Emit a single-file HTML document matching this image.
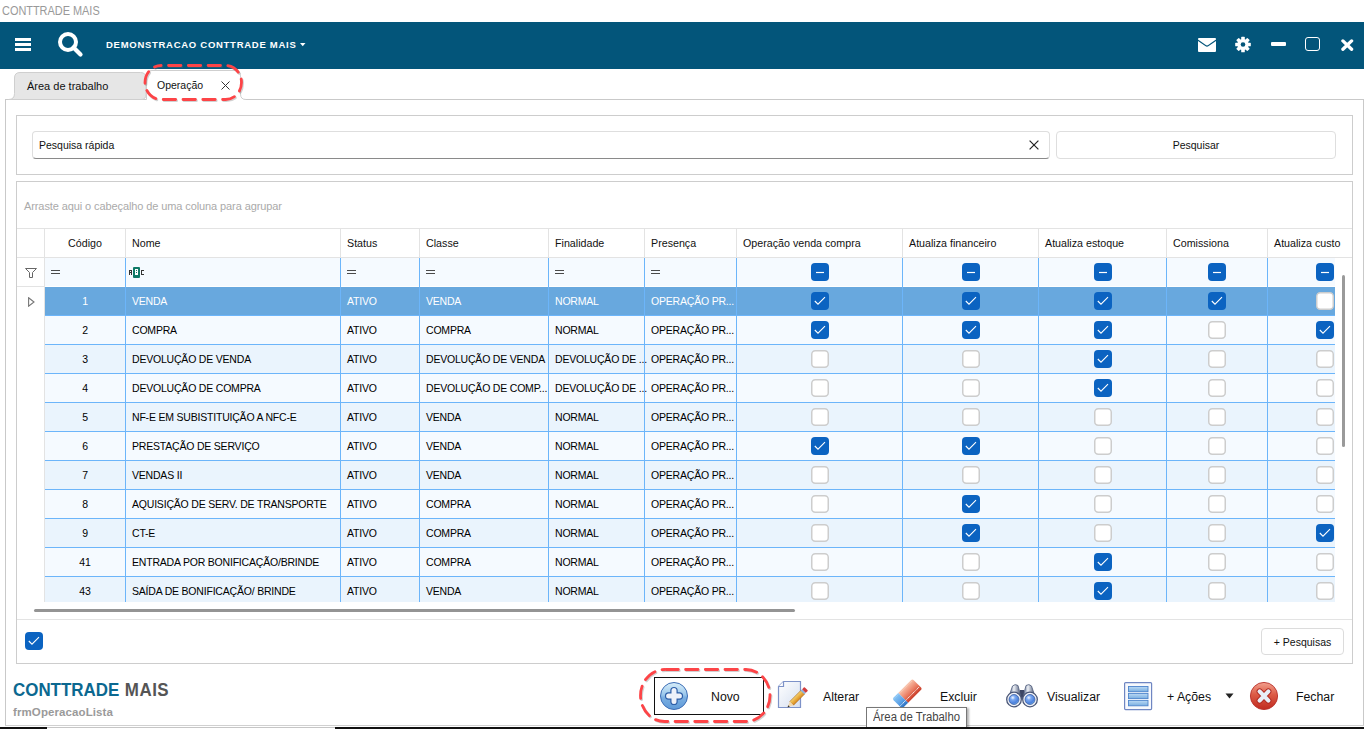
<!DOCTYPE html>
<html><head><meta charset="utf-8">
<style>
*{box-sizing:border-box;margin:0;padding:0}
html,body{width:1364px;height:729px;overflow:hidden;background:#fff;font-family:"Liberation Sans",sans-serif;color:#000}
.a{position:absolute;white-space:nowrap}
#title{left:2px;top:4px;font-size:12px;color:#999;transform:scaleX(0.91);transform-origin:0 0}
#hdr{left:0;top:22px;width:1364px;height:47px;background:#03557a}
#hdrtxt{left:106px;top:38.6px;font-size:9.5px;font-weight:bold;color:#fff;letter-spacing:0.72px}
.tab{top:72px;height:28px;border:1px solid #cfcfcf;border-bottom:none;border-radius:6px 6px 0 0;font-size:11px;padding-top:7px;color:#111}
#tab1{left:13px;width:134px;background:#e6e6e6;padding-left:13px}
#tab2{left:146px;width:96px;background:#fff;padding-left:10px;top:70px;height:30px;padding-top:9px;font-size:10.5px}
#outer{left:5px;top:99px;width:1359px;height:627px;border:1px solid #c9c9c9;border-bottom:1px solid #d0d0d0}
#sbox{left:16px;top:115px;width:1337px;height:60px;border:1px solid #cdcdcd}
#sinp{left:32px;top:131px;width:1018px;height:28px;border:1px solid #dedede;border-bottom:1px solid #8a8a8a;border-radius:4px;font-size:10.5px;padding:7px 0 0 6px;color:#111}
#sbtn{left:1056px;top:131px;width:280px;height:28px;border:1px solid #dedede;border-radius:4px;font-size:10.5px;text-align:center;padding-top:7px;color:#111}
#gbox{left:16px;top:181px;width:1337px;height:483px;border:1px solid #cdcdcd}
#grp{left:24px;top:200px;font-size:11px;color:#aaa;letter-spacing:-0.1px}
.hd{font-size:10.7px;color:#111}
.td{font-size:10.5px;letter-spacing:-0.2px}
#pbtn{left:1261px;top:628px;width:83px;height:27px;border:1px solid #dcdcdc;border-radius:4px;font-size:10.5px;text-align:center;padding-top:7px;color:#111}
#logo{left:13px;top:680px;font-size:18px;font-weight:bold;transform:scaleX(0.94);transform-origin:0 0}
#frm{left:13px;top:706px;font-size:11.5px;font-weight:bold;color:#9a9a9a;letter-spacing:0.1px}
.tb{top:690px;font-size:12.3px;color:#111}
#tip{left:866px;top:707px;width:101px;height:21px;border:1px solid #777;background:#fff;color:#444;box-shadow:2px 1px 2px rgba(0,0,0,0.3)}
#tip span{position:absolute;left:6px;top:2px;font-size:12px;transform:scaleX(0.945);transform-origin:0 0}
.tabt{font-size:11px;color:#111}

</style></head><body>
<div class="a" id="title">CONTTRADE MAIS</div>
<div class="a" id="hdr"></div>
<svg class="a" style="left:15px;top:38px" width="16" height="13" viewBox="0 0 16 13"><rect x="0" y="0" width="16" height="3" fill="#fff"/><rect x="0" y="5" width="16" height="3" fill="#fff"/><rect x="0" y="10" width="16" height="3" fill="#fff"/></svg>
<svg class="a" style="left:56px;top:30px" width="30" height="30" viewBox="0 0 30 30"><circle cx="12" cy="12" r="8" fill="none" stroke="#fff" stroke-width="4"/><path d="M17.5 17.5 L24.5 24.5" stroke="#fff" stroke-width="4.2" stroke-linecap="round"/></svg>
<div class="a" id="hdrtxt">DEMONSTRACAO CONTTRADE MAIS</div>
<svg class="a" style="left:300px;top:43px" width="6" height="4" viewBox="0 0 6 4"><path d="M0 0 H5.5 L2.75 3.2 Z" fill="#fff"/></svg>
<svg class="a" style="left:1198px;top:38px" width="18" height="14" viewBox="0 0 18 14"><path d="M0 1 Q0 0 1 0 H17 Q18 0 18 1 V1.6 L10.2 7 Q9 7.8 7.8 7 L0 1.6 Z" fill="#fff"/><path d="M0 3.1 L7.3 8.1 Q9 9.2 10.7 8.1 L18 3.1 V13 Q18 14 17 14 H1 Q0 14 0 13 Z" fill="#fff"/></svg>
<svg class="a" style="left:1234px;top:36px" width="18" height="17" viewBox="-9 -8.5 18 17"><g fill="#fff"><circle r="5.6"/><rect x="-1.8" y="-7.8" width="3.6" height="15.6" rx="0.6"/><rect x="-1.8" y="-7.8" width="3.6" height="15.6" rx="0.6" transform="rotate(45)"/><rect x="-1.8" y="-7.8" width="3.6" height="15.6" rx="0.6" transform="rotate(90)"/><rect x="-1.8" y="-7.8" width="3.6" height="15.6" rx="0.6" transform="rotate(135)"/></g><circle r="2.3" fill="#03557a"/></svg>
<div class="a" style="left:1271px;top:42px;width:15px;height:4px;background:#fff;border-radius:1px"></div>
<div class="a" style="left:1305px;top:37px;width:15px;height:14px;border:1.6px solid #fff;border-radius:3px"></div>
<svg class="a" style="left:1340px;top:39px" width="14" height="12" viewBox="0 0 14 12"><path d="M2.9 1.9 L11.6 10.3 M11.6 1.9 L2.9 10.3" stroke="#fff" stroke-width="3.3" stroke-linecap="round"/></svg>
<div class="a" id="outer"></div>
<svg class="a" style="left:0;top:60px" width="260" height="45" viewBox="0 60 260 45"><path d="M8.5 99.5 Q14.5 99.5 14.5 93.5 V78 Q14.5 72.5 20 72.5 H140.5 Q146 72.5 146 78 V94.5 Q146 99.5 141 99.5 Z" fill="#e6e6e6" stroke="#cfcfcf" stroke-width="1"/><path d="M146.5 100.5 V76 Q146.5 70.5 152 70.5 H235 Q240.5 70.5 240.5 76 V94 Q240.5 99.5 246 99.5 V100.5 Z" fill="#fff" stroke="none"/><path d="M146.5 99.5 V76 Q146.5 70.5 152 70.5 H235 Q240.5 70.5 240.5 76 V94 Q240.5 99.5 246 99.5" fill="none" stroke="#cfcfcf" stroke-width="1"/></svg>
<div class="a tabt" style="left:27px;top:80px">Área de trabalho</div>
<div class="a tabt" style="left:157px;top:79px;font-size:10.5px">Operação</div>
<svg class="a" style="left:221px;top:81px" width="9" height="9" viewBox="0 0 9 9"><path d="M0.5 0.5 L8.5 8.5 M8.5 0.5 L0.5 8.5" stroke="#333" stroke-width="1"/></svg>
<div class="a" id="sbox"></div>
<div class="a" id="sinp">Pesquisa rápida</div>
<svg class="a" style="left:1029px;top:140px" width="10" height="10" viewBox="0 0 10 10"><path d="M0.6 0.6 L9.4 9.4 M9.4 0.6 L0.6 9.4" stroke="#222" stroke-width="1.2"/></svg>
<div class="a" id="sbtn">Pesquisar</div>
<div class="a" id="gbox"></div>
<div class="a" id="grp">Arraste aqui o cabeçalho de uma coluna para agrupar</div>
<div class="a" style="left:17px;top:228px;width:1335px;height:1px;background:#e3e3e3"></div>
<div class="a" style="left:17px;top:257px;width:1335px;height:1px;background:#e3e3e3"></div>
<div class="a" id="gclip" style="left:17px;top:228px;width:1335px;height:374px;overflow:hidden">
<div class="a" style="left:27px;top:0;width:1px;height:29px;background:#e3e3e3"></div>
<div class="a" style="left:108px;top:0;width:1px;height:29px;background:#e3e3e3"></div>
<div class="a" style="left:323px;top:0;width:1px;height:29px;background:#e3e3e3"></div>
<div class="a" style="left:402px;top:0;width:1px;height:29px;background:#e3e3e3"></div>
<div class="a" style="left:531px;top:0;width:1px;height:29px;background:#e3e3e3"></div>
<div class="a" style="left:627px;top:0;width:1px;height:29px;background:#e3e3e3"></div>
<div class="a" style="left:719px;top:0;width:1px;height:29px;background:#e3e3e3"></div>
<div class="a" style="left:885px;top:0;width:1px;height:29px;background:#e3e3e3"></div>
<div class="a" style="left:1021px;top:0;width:1px;height:29px;background:#e3e3e3"></div>
<div class="a" style="left:1149px;top:0;width:1px;height:29px;background:#e3e3e3"></div>
<div class="a" style="left:1250px;top:0;width:1px;height:29px;background:#e3e3e3"></div>
<div class="a hd" style="left:28px;top:9px;width:80px;text-align:center">Código</div>
<div class="a hd" style="left:115px;top:9px">Nome</div>
<div class="a hd" style="left:330px;top:9px">Status</div>
<div class="a hd" style="left:409px;top:9px">Classe</div>
<div class="a hd" style="left:538px;top:9px">Finalidade</div>
<div class="a hd" style="left:634px;top:9px">Presença</div>
<div class="a hd" style="left:726px;top:9px">Operação venda compra</div>
<div class="a hd" style="left:892px;top:9px">Atualiza financeiro</div>
<div class="a hd" style="left:1028px;top:9px">Atualiza estoque</div>
<div class="a hd" style="left:1156px;top:9px">Comissiona</div>
<div class="a hd" style="left:1257px;top:9px">Atualiza custo</div>
<div class="a" style="left:28px;top:30px;width:1290px;height:28px;background:#f5faff"></div>
<svg class="a" style="left:8px;top:40px" width="12" height="11" viewBox="0 0 12 11"><path d="M0.5 0.5 H11.5 L7.5 4.5 V9.5 H4.5 V4.5 Z" fill="none" stroke="#666" stroke-width="1"/></svg>
<div class="a" style="left:34px;top:42px;width:9px;height:4px;border-top:1px solid #4a4a4a;border-bottom:1px solid #4a4a4a"></div>
<div class="a" style="left:112px;top:39px;line-height:0"><svg width="16" height="12" viewBox="0 0 16 12" shape-rendering="crispEdges"><g fill="#333"><rect x="0" y="3" width="3" height="1"/><rect x="0" y="3" width="1" height="5"/><rect x="2" y="3" width="1" height="5"/><rect x="0" y="5" width="3" height="1"/><rect x="12" y="3" width="3" height="1"/><rect x="12" y="3" width="1" height="5"/><rect x="12" y="7" width="3" height="1"/></g><rect x="4" y="0" width="7" height="11" rx="1" fill="#0f7a68" shape-rendering="auto"/><rect x="6" y="2" width="3" height="6" fill="#fff"/><rect x="7" y="3" width="1" height="1" fill="#0f7a68"/><rect x="7" y="5" width="1" height="1" fill="#0f7a68"/></svg></div>
<div class="a" style="left:330px;top:42px;width:9px;height:4px;border-top:1px solid #4a4a4a;border-bottom:1px solid #4a4a4a"></div>
<div class="a" style="left:409px;top:42px;width:9px;height:4px;border-top:1px solid #4a4a4a;border-bottom:1px solid #4a4a4a"></div>
<div class="a" style="left:538px;top:42px;width:9px;height:4px;border-top:1px solid #4a4a4a;border-bottom:1px solid #4a4a4a"></div>
<div class="a" style="left:634px;top:42px;width:9px;height:4px;border-top:1px solid #4a4a4a;border-bottom:1px solid #4a4a4a"></div>
<div class="a" style="left:794px;top:35px;width:18px;height:18px"><svg width="18" height="18" viewBox="0 0 18 18"><rect x="0" y="0" width="18" height="18" rx="4" fill="#0b63c1"/><path d="M5 9.5 H13" fill="none" stroke="#fff" stroke-width="1.2"/></svg></div>
<div class="a" style="left:945px;top:35px;width:18px;height:18px"><svg width="18" height="18" viewBox="0 0 18 18"><rect x="0" y="0" width="18" height="18" rx="4" fill="#0b63c1"/><path d="M5 9.5 H13" fill="none" stroke="#fff" stroke-width="1.2"/></svg></div>
<div class="a" style="left:1077px;top:35px;width:18px;height:18px"><svg width="18" height="18" viewBox="0 0 18 18"><rect x="0" y="0" width="18" height="18" rx="4" fill="#0b63c1"/><path d="M5 9.5 H13" fill="none" stroke="#fff" stroke-width="1.2"/></svg></div>
<div class="a" style="left:1191px;top:35px;width:18px;height:18px"><svg width="18" height="18" viewBox="0 0 18 18"><rect x="0" y="0" width="18" height="18" rx="4" fill="#0b63c1"/><path d="M5 9.5 H13" fill="none" stroke="#fff" stroke-width="1.2"/></svg></div>
<div class="a" style="left:1299px;top:35px;width:18px;height:18px"><svg width="18" height="18" viewBox="0 0 18 18"><rect x="0" y="0" width="18" height="18" rx="4" fill="#0b63c1"/><path d="M5 9.5 H13" fill="none" stroke="#fff" stroke-width="1.2"/></svg></div>
<div class="a" style="left:28px;top:59px;width:1290px;height:28px;background:#68a8de"></div>
<div class="a" style="left:28px;top:87px;width:1290px;height:1px;background:#6cb5fa"></div>
<div class="a td" style="left:28px;top:67px;width:80px;text-align:center;color:#fff">1</div>
<div class="a td" style="left:115px;top:67px;color:#fff">VENDA</div>
<div class="a td" style="left:330px;top:67px;color:#fff">ATIVO</div>
<div class="a td" style="left:409px;top:67px;color:#fff">VENDA</div>
<div class="a td" style="left:538px;top:67px;color:#fff">NORMAL</div>
<div class="a td" style="left:634px;top:67px;color:#fff">OPERAÇÃO PR...</div>
<div class="a" style="left:794px;top:64px;width:18px;height:18px"><svg width="18" height="18" viewBox="0 0 18 18"><rect x="0" y="0" width="18" height="18" rx="4" fill="#0b63c1"/><path d="M3.8 9 L7 12.2 L14 5.2" fill="none" stroke="#fff" stroke-width="1.1"/></svg></div>
<div class="a" style="left:945px;top:64px;width:18px;height:18px"><svg width="18" height="18" viewBox="0 0 18 18"><rect x="0" y="0" width="18" height="18" rx="4" fill="#0b63c1"/><path d="M3.8 9 L7 12.2 L14 5.2" fill="none" stroke="#fff" stroke-width="1.1"/></svg></div>
<div class="a" style="left:1077px;top:64px;width:18px;height:18px"><svg width="18" height="18" viewBox="0 0 18 18"><rect x="0" y="0" width="18" height="18" rx="4" fill="#0b63c1"/><path d="M3.8 9 L7 12.2 L14 5.2" fill="none" stroke="#fff" stroke-width="1.1"/></svg></div>
<div class="a" style="left:1191px;top:64px;width:18px;height:18px"><svg width="18" height="18" viewBox="0 0 18 18"><rect x="0" y="0" width="18" height="18" rx="4" fill="#0b63c1"/><path d="M3.8 9 L7 12.2 L14 5.2" fill="none" stroke="#fff" stroke-width="1.1"/></svg></div>
<div class="a" style="left:1299px;top:64px;width:18px;height:18px"><svg width="18" height="18" viewBox="0 0 18 18"><rect x="0.75" y="0.75" width="16.5" height="16.5" rx="3.5" fill="#fff" stroke="#cdcdcd" stroke-width="1.5"/></svg></div>
<div class="a" style="left:28px;top:88px;width:1290px;height:28px;background:#f5faff"></div>
<div class="a" style="left:28px;top:116px;width:1290px;height:1px;background:#6cb5fa"></div>
<div class="a td" style="left:28px;top:96px;width:80px;text-align:center;color:#000">2</div>
<div class="a td" style="left:115px;top:96px;color:#000">COMPRA</div>
<div class="a td" style="left:330px;top:96px;color:#000">ATIVO</div>
<div class="a td" style="left:409px;top:96px;color:#000">COMPRA</div>
<div class="a td" style="left:538px;top:96px;color:#000">NORMAL</div>
<div class="a td" style="left:634px;top:96px;color:#000">OPERAÇÃO PR...</div>
<div class="a" style="left:794px;top:93px;width:18px;height:18px"><svg width="18" height="18" viewBox="0 0 18 18"><rect x="0" y="0" width="18" height="18" rx="4" fill="#0b63c1"/><path d="M3.8 9 L7 12.2 L14 5.2" fill="none" stroke="#fff" stroke-width="1.1"/></svg></div>
<div class="a" style="left:945px;top:93px;width:18px;height:18px"><svg width="18" height="18" viewBox="0 0 18 18"><rect x="0" y="0" width="18" height="18" rx="4" fill="#0b63c1"/><path d="M3.8 9 L7 12.2 L14 5.2" fill="none" stroke="#fff" stroke-width="1.1"/></svg></div>
<div class="a" style="left:1077px;top:93px;width:18px;height:18px"><svg width="18" height="18" viewBox="0 0 18 18"><rect x="0" y="0" width="18" height="18" rx="4" fill="#0b63c1"/><path d="M3.8 9 L7 12.2 L14 5.2" fill="none" stroke="#fff" stroke-width="1.1"/></svg></div>
<div class="a" style="left:1191px;top:93px;width:18px;height:18px"><svg width="18" height="18" viewBox="0 0 18 18"><rect x="0.75" y="0.75" width="16.5" height="16.5" rx="3.5" fill="#fff" stroke="#cdcdcd" stroke-width="1.5"/></svg></div>
<div class="a" style="left:1299px;top:93px;width:18px;height:18px"><svg width="18" height="18" viewBox="0 0 18 18"><rect x="0" y="0" width="18" height="18" rx="4" fill="#0b63c1"/><path d="M3.8 9 L7 12.2 L14 5.2" fill="none" stroke="#fff" stroke-width="1.1"/></svg></div>
<div class="a" style="left:28px;top:117px;width:1290px;height:28px;background:#eaf4fd"></div>
<div class="a" style="left:28px;top:145px;width:1290px;height:1px;background:#6cb5fa"></div>
<div class="a td" style="left:28px;top:125px;width:80px;text-align:center;color:#000">3</div>
<div class="a td" style="left:115px;top:125px;color:#000">DEVOLUÇÃO DE VENDA</div>
<div class="a td" style="left:330px;top:125px;color:#000">ATIVO</div>
<div class="a td" style="left:409px;top:125px;color:#000">DEVOLUÇÃO DE VENDA</div>
<div class="a td" style="left:538px;top:125px;color:#000">DEVOLUÇÃO DE ...</div>
<div class="a td" style="left:634px;top:125px;color:#000">OPERAÇÃO PR...</div>
<div class="a" style="left:794px;top:122px;width:18px;height:18px"><svg width="18" height="18" viewBox="0 0 18 18"><rect x="0.75" y="0.75" width="16.5" height="16.5" rx="3.5" fill="#fff" stroke="#cdcdcd" stroke-width="1.5"/></svg></div>
<div class="a" style="left:945px;top:122px;width:18px;height:18px"><svg width="18" height="18" viewBox="0 0 18 18"><rect x="0.75" y="0.75" width="16.5" height="16.5" rx="3.5" fill="#fff" stroke="#cdcdcd" stroke-width="1.5"/></svg></div>
<div class="a" style="left:1077px;top:122px;width:18px;height:18px"><svg width="18" height="18" viewBox="0 0 18 18"><rect x="0" y="0" width="18" height="18" rx="4" fill="#0b63c1"/><path d="M3.8 9 L7 12.2 L14 5.2" fill="none" stroke="#fff" stroke-width="1.1"/></svg></div>
<div class="a" style="left:1191px;top:122px;width:18px;height:18px"><svg width="18" height="18" viewBox="0 0 18 18"><rect x="0.75" y="0.75" width="16.5" height="16.5" rx="3.5" fill="#fff" stroke="#cdcdcd" stroke-width="1.5"/></svg></div>
<div class="a" style="left:1299px;top:122px;width:18px;height:18px"><svg width="18" height="18" viewBox="0 0 18 18"><rect x="0.75" y="0.75" width="16.5" height="16.5" rx="3.5" fill="#fff" stroke="#cdcdcd" stroke-width="1.5"/></svg></div>
<div class="a" style="left:28px;top:146px;width:1290px;height:28px;background:#f5faff"></div>
<div class="a" style="left:28px;top:174px;width:1290px;height:1px;background:#6cb5fa"></div>
<div class="a td" style="left:28px;top:154px;width:80px;text-align:center;color:#000">4</div>
<div class="a td" style="left:115px;top:154px;color:#000">DEVOLUÇÃO DE COMPRA</div>
<div class="a td" style="left:330px;top:154px;color:#000">ATIVO</div>
<div class="a td" style="left:409px;top:154px;color:#000">DEVOLUÇÃO DE COMP...</div>
<div class="a td" style="left:538px;top:154px;color:#000">DEVOLUÇÃO DE ...</div>
<div class="a td" style="left:634px;top:154px;color:#000">OPERAÇÃO PR...</div>
<div class="a" style="left:794px;top:151px;width:18px;height:18px"><svg width="18" height="18" viewBox="0 0 18 18"><rect x="0.75" y="0.75" width="16.5" height="16.5" rx="3.5" fill="#fff" stroke="#cdcdcd" stroke-width="1.5"/></svg></div>
<div class="a" style="left:945px;top:151px;width:18px;height:18px"><svg width="18" height="18" viewBox="0 0 18 18"><rect x="0.75" y="0.75" width="16.5" height="16.5" rx="3.5" fill="#fff" stroke="#cdcdcd" stroke-width="1.5"/></svg></div>
<div class="a" style="left:1077px;top:151px;width:18px;height:18px"><svg width="18" height="18" viewBox="0 0 18 18"><rect x="0" y="0" width="18" height="18" rx="4" fill="#0b63c1"/><path d="M3.8 9 L7 12.2 L14 5.2" fill="none" stroke="#fff" stroke-width="1.1"/></svg></div>
<div class="a" style="left:1191px;top:151px;width:18px;height:18px"><svg width="18" height="18" viewBox="0 0 18 18"><rect x="0.75" y="0.75" width="16.5" height="16.5" rx="3.5" fill="#fff" stroke="#cdcdcd" stroke-width="1.5"/></svg></div>
<div class="a" style="left:1299px;top:151px;width:18px;height:18px"><svg width="18" height="18" viewBox="0 0 18 18"><rect x="0.75" y="0.75" width="16.5" height="16.5" rx="3.5" fill="#fff" stroke="#cdcdcd" stroke-width="1.5"/></svg></div>
<div class="a" style="left:28px;top:175px;width:1290px;height:28px;background:#eaf4fd"></div>
<div class="a" style="left:28px;top:203px;width:1290px;height:1px;background:#6cb5fa"></div>
<div class="a td" style="left:28px;top:183px;width:80px;text-align:center;color:#000">5</div>
<div class="a td" style="left:115px;top:183px;color:#000">NF-E EM SUBISTITUIÇÃO A NFC-E</div>
<div class="a td" style="left:330px;top:183px;color:#000">ATIVO</div>
<div class="a td" style="left:409px;top:183px;color:#000">VENDA</div>
<div class="a td" style="left:538px;top:183px;color:#000">NORMAL</div>
<div class="a td" style="left:634px;top:183px;color:#000">OPERAÇÃO PR...</div>
<div class="a" style="left:794px;top:180px;width:18px;height:18px"><svg width="18" height="18" viewBox="0 0 18 18"><rect x="0.75" y="0.75" width="16.5" height="16.5" rx="3.5" fill="#fff" stroke="#cdcdcd" stroke-width="1.5"/></svg></div>
<div class="a" style="left:945px;top:180px;width:18px;height:18px"><svg width="18" height="18" viewBox="0 0 18 18"><rect x="0.75" y="0.75" width="16.5" height="16.5" rx="3.5" fill="#fff" stroke="#cdcdcd" stroke-width="1.5"/></svg></div>
<div class="a" style="left:1077px;top:180px;width:18px;height:18px"><svg width="18" height="18" viewBox="0 0 18 18"><rect x="0.75" y="0.75" width="16.5" height="16.5" rx="3.5" fill="#fff" stroke="#cdcdcd" stroke-width="1.5"/></svg></div>
<div class="a" style="left:1191px;top:180px;width:18px;height:18px"><svg width="18" height="18" viewBox="0 0 18 18"><rect x="0.75" y="0.75" width="16.5" height="16.5" rx="3.5" fill="#fff" stroke="#cdcdcd" stroke-width="1.5"/></svg></div>
<div class="a" style="left:1299px;top:180px;width:18px;height:18px"><svg width="18" height="18" viewBox="0 0 18 18"><rect x="0.75" y="0.75" width="16.5" height="16.5" rx="3.5" fill="#fff" stroke="#cdcdcd" stroke-width="1.5"/></svg></div>
<div class="a" style="left:28px;top:204px;width:1290px;height:28px;background:#f5faff"></div>
<div class="a" style="left:28px;top:232px;width:1290px;height:1px;background:#6cb5fa"></div>
<div class="a td" style="left:28px;top:212px;width:80px;text-align:center;color:#000">6</div>
<div class="a td" style="left:115px;top:212px;color:#000">PRESTAÇÃO DE SERVIÇO</div>
<div class="a td" style="left:330px;top:212px;color:#000">ATIVO</div>
<div class="a td" style="left:409px;top:212px;color:#000">VENDA</div>
<div class="a td" style="left:538px;top:212px;color:#000">NORMAL</div>
<div class="a td" style="left:634px;top:212px;color:#000">OPERAÇÃO PR...</div>
<div class="a" style="left:794px;top:209px;width:18px;height:18px"><svg width="18" height="18" viewBox="0 0 18 18"><rect x="0" y="0" width="18" height="18" rx="4" fill="#0b63c1"/><path d="M3.8 9 L7 12.2 L14 5.2" fill="none" stroke="#fff" stroke-width="1.1"/></svg></div>
<div class="a" style="left:945px;top:209px;width:18px;height:18px"><svg width="18" height="18" viewBox="0 0 18 18"><rect x="0" y="0" width="18" height="18" rx="4" fill="#0b63c1"/><path d="M3.8 9 L7 12.2 L14 5.2" fill="none" stroke="#fff" stroke-width="1.1"/></svg></div>
<div class="a" style="left:1077px;top:209px;width:18px;height:18px"><svg width="18" height="18" viewBox="0 0 18 18"><rect x="0.75" y="0.75" width="16.5" height="16.5" rx="3.5" fill="#fff" stroke="#cdcdcd" stroke-width="1.5"/></svg></div>
<div class="a" style="left:1191px;top:209px;width:18px;height:18px"><svg width="18" height="18" viewBox="0 0 18 18"><rect x="0.75" y="0.75" width="16.5" height="16.5" rx="3.5" fill="#fff" stroke="#cdcdcd" stroke-width="1.5"/></svg></div>
<div class="a" style="left:1299px;top:209px;width:18px;height:18px"><svg width="18" height="18" viewBox="0 0 18 18"><rect x="0.75" y="0.75" width="16.5" height="16.5" rx="3.5" fill="#fff" stroke="#cdcdcd" stroke-width="1.5"/></svg></div>
<div class="a" style="left:28px;top:233px;width:1290px;height:28px;background:#eaf4fd"></div>
<div class="a" style="left:28px;top:261px;width:1290px;height:1px;background:#6cb5fa"></div>
<div class="a td" style="left:28px;top:241px;width:80px;text-align:center;color:#000">7</div>
<div class="a td" style="left:115px;top:241px;color:#000">VENDAS II</div>
<div class="a td" style="left:330px;top:241px;color:#000">ATIVO</div>
<div class="a td" style="left:409px;top:241px;color:#000">VENDA</div>
<div class="a td" style="left:538px;top:241px;color:#000">NORMAL</div>
<div class="a td" style="left:634px;top:241px;color:#000">OPERAÇÃO PR...</div>
<div class="a" style="left:794px;top:238px;width:18px;height:18px"><svg width="18" height="18" viewBox="0 0 18 18"><rect x="0.75" y="0.75" width="16.5" height="16.5" rx="3.5" fill="#fff" stroke="#cdcdcd" stroke-width="1.5"/></svg></div>
<div class="a" style="left:945px;top:238px;width:18px;height:18px"><svg width="18" height="18" viewBox="0 0 18 18"><rect x="0.75" y="0.75" width="16.5" height="16.5" rx="3.5" fill="#fff" stroke="#cdcdcd" stroke-width="1.5"/></svg></div>
<div class="a" style="left:1077px;top:238px;width:18px;height:18px"><svg width="18" height="18" viewBox="0 0 18 18"><rect x="0.75" y="0.75" width="16.5" height="16.5" rx="3.5" fill="#fff" stroke="#cdcdcd" stroke-width="1.5"/></svg></div>
<div class="a" style="left:1191px;top:238px;width:18px;height:18px"><svg width="18" height="18" viewBox="0 0 18 18"><rect x="0.75" y="0.75" width="16.5" height="16.5" rx="3.5" fill="#fff" stroke="#cdcdcd" stroke-width="1.5"/></svg></div>
<div class="a" style="left:1299px;top:238px;width:18px;height:18px"><svg width="18" height="18" viewBox="0 0 18 18"><rect x="0.75" y="0.75" width="16.5" height="16.5" rx="3.5" fill="#fff" stroke="#cdcdcd" stroke-width="1.5"/></svg></div>
<div class="a" style="left:28px;top:262px;width:1290px;height:28px;background:#f5faff"></div>
<div class="a" style="left:28px;top:290px;width:1290px;height:1px;background:#6cb5fa"></div>
<div class="a td" style="left:28px;top:270px;width:80px;text-align:center;color:#000">8</div>
<div class="a td" style="left:115px;top:270px;color:#000">AQUISIÇÃO DE SERV. DE TRANSPORTE</div>
<div class="a td" style="left:330px;top:270px;color:#000">ATIVO</div>
<div class="a td" style="left:409px;top:270px;color:#000">COMPRA</div>
<div class="a td" style="left:538px;top:270px;color:#000">NORMAL</div>
<div class="a td" style="left:634px;top:270px;color:#000">OPERAÇÃO PR...</div>
<div class="a" style="left:794px;top:267px;width:18px;height:18px"><svg width="18" height="18" viewBox="0 0 18 18"><rect x="0.75" y="0.75" width="16.5" height="16.5" rx="3.5" fill="#fff" stroke="#cdcdcd" stroke-width="1.5"/></svg></div>
<div class="a" style="left:945px;top:267px;width:18px;height:18px"><svg width="18" height="18" viewBox="0 0 18 18"><rect x="0" y="0" width="18" height="18" rx="4" fill="#0b63c1"/><path d="M3.8 9 L7 12.2 L14 5.2" fill="none" stroke="#fff" stroke-width="1.1"/></svg></div>
<div class="a" style="left:1077px;top:267px;width:18px;height:18px"><svg width="18" height="18" viewBox="0 0 18 18"><rect x="0.75" y="0.75" width="16.5" height="16.5" rx="3.5" fill="#fff" stroke="#cdcdcd" stroke-width="1.5"/></svg></div>
<div class="a" style="left:1191px;top:267px;width:18px;height:18px"><svg width="18" height="18" viewBox="0 0 18 18"><rect x="0.75" y="0.75" width="16.5" height="16.5" rx="3.5" fill="#fff" stroke="#cdcdcd" stroke-width="1.5"/></svg></div>
<div class="a" style="left:1299px;top:267px;width:18px;height:18px"><svg width="18" height="18" viewBox="0 0 18 18"><rect x="0.75" y="0.75" width="16.5" height="16.5" rx="3.5" fill="#fff" stroke="#cdcdcd" stroke-width="1.5"/></svg></div>
<div class="a" style="left:28px;top:291px;width:1290px;height:28px;background:#eaf4fd"></div>
<div class="a" style="left:28px;top:319px;width:1290px;height:1px;background:#6cb5fa"></div>
<div class="a td" style="left:28px;top:299px;width:80px;text-align:center;color:#000">9</div>
<div class="a td" style="left:115px;top:299px;color:#000">CT-E</div>
<div class="a td" style="left:330px;top:299px;color:#000">ATIVO</div>
<div class="a td" style="left:409px;top:299px;color:#000">COMPRA</div>
<div class="a td" style="left:538px;top:299px;color:#000">NORMAL</div>
<div class="a td" style="left:634px;top:299px;color:#000">OPERAÇÃO PR...</div>
<div class="a" style="left:794px;top:296px;width:18px;height:18px"><svg width="18" height="18" viewBox="0 0 18 18"><rect x="0.75" y="0.75" width="16.5" height="16.5" rx="3.5" fill="#fff" stroke="#cdcdcd" stroke-width="1.5"/></svg></div>
<div class="a" style="left:945px;top:296px;width:18px;height:18px"><svg width="18" height="18" viewBox="0 0 18 18"><rect x="0" y="0" width="18" height="18" rx="4" fill="#0b63c1"/><path d="M3.8 9 L7 12.2 L14 5.2" fill="none" stroke="#fff" stroke-width="1.1"/></svg></div>
<div class="a" style="left:1077px;top:296px;width:18px;height:18px"><svg width="18" height="18" viewBox="0 0 18 18"><rect x="0.75" y="0.75" width="16.5" height="16.5" rx="3.5" fill="#fff" stroke="#cdcdcd" stroke-width="1.5"/></svg></div>
<div class="a" style="left:1191px;top:296px;width:18px;height:18px"><svg width="18" height="18" viewBox="0 0 18 18"><rect x="0.75" y="0.75" width="16.5" height="16.5" rx="3.5" fill="#fff" stroke="#cdcdcd" stroke-width="1.5"/></svg></div>
<div class="a" style="left:1299px;top:296px;width:18px;height:18px"><svg width="18" height="18" viewBox="0 0 18 18"><rect x="0" y="0" width="18" height="18" rx="4" fill="#0b63c1"/><path d="M3.8 9 L7 12.2 L14 5.2" fill="none" stroke="#fff" stroke-width="1.1"/></svg></div>
<div class="a" style="left:28px;top:320px;width:1290px;height:28px;background:#f5faff"></div>
<div class="a" style="left:28px;top:348px;width:1290px;height:1px;background:#6cb5fa"></div>
<div class="a td" style="left:28px;top:328px;width:80px;text-align:center;color:#000">41</div>
<div class="a td" style="left:115px;top:328px;color:#000">ENTRADA POR BONIFICAÇÃO/BRINDE</div>
<div class="a td" style="left:330px;top:328px;color:#000">ATIVO</div>
<div class="a td" style="left:409px;top:328px;color:#000">COMPRA</div>
<div class="a td" style="left:538px;top:328px;color:#000">NORMAL</div>
<div class="a td" style="left:634px;top:328px;color:#000">OPERAÇÃO PR...</div>
<div class="a" style="left:794px;top:325px;width:18px;height:18px"><svg width="18" height="18" viewBox="0 0 18 18"><rect x="0.75" y="0.75" width="16.5" height="16.5" rx="3.5" fill="#fff" stroke="#cdcdcd" stroke-width="1.5"/></svg></div>
<div class="a" style="left:945px;top:325px;width:18px;height:18px"><svg width="18" height="18" viewBox="0 0 18 18"><rect x="0.75" y="0.75" width="16.5" height="16.5" rx="3.5" fill="#fff" stroke="#cdcdcd" stroke-width="1.5"/></svg></div>
<div class="a" style="left:1077px;top:325px;width:18px;height:18px"><svg width="18" height="18" viewBox="0 0 18 18"><rect x="0" y="0" width="18" height="18" rx="4" fill="#0b63c1"/><path d="M3.8 9 L7 12.2 L14 5.2" fill="none" stroke="#fff" stroke-width="1.1"/></svg></div>
<div class="a" style="left:1191px;top:325px;width:18px;height:18px"><svg width="18" height="18" viewBox="0 0 18 18"><rect x="0.75" y="0.75" width="16.5" height="16.5" rx="3.5" fill="#fff" stroke="#cdcdcd" stroke-width="1.5"/></svg></div>
<div class="a" style="left:1299px;top:325px;width:18px;height:18px"><svg width="18" height="18" viewBox="0 0 18 18"><rect x="0.75" y="0.75" width="16.5" height="16.5" rx="3.5" fill="#fff" stroke="#cdcdcd" stroke-width="1.5"/></svg></div>
<div class="a" style="left:28px;top:349px;width:1290px;height:28px;background:#eaf4fd"></div>
<div class="a" style="left:28px;top:377px;width:1290px;height:1px;background:#6cb5fa"></div>
<div class="a td" style="left:28px;top:357px;width:80px;text-align:center;color:#000">43</div>
<div class="a td" style="left:115px;top:357px;color:#000">SAÍDA DE BONIFICAÇÃO/ BRINDE</div>
<div class="a td" style="left:330px;top:357px;color:#000">ATIVO</div>
<div class="a td" style="left:409px;top:357px;color:#000">VENDA</div>
<div class="a td" style="left:538px;top:357px;color:#000">NORMAL</div>
<div class="a td" style="left:634px;top:357px;color:#000">OPERAÇÃO PR...</div>
<div class="a" style="left:794px;top:354px;width:18px;height:18px"><svg width="18" height="18" viewBox="0 0 18 18"><rect x="0.75" y="0.75" width="16.5" height="16.5" rx="3.5" fill="#fff" stroke="#cdcdcd" stroke-width="1.5"/></svg></div>
<div class="a" style="left:945px;top:354px;width:18px;height:18px"><svg width="18" height="18" viewBox="0 0 18 18"><rect x="0.75" y="0.75" width="16.5" height="16.5" rx="3.5" fill="#fff" stroke="#cdcdcd" stroke-width="1.5"/></svg></div>
<div class="a" style="left:1077px;top:354px;width:18px;height:18px"><svg width="18" height="18" viewBox="0 0 18 18"><rect x="0" y="0" width="18" height="18" rx="4" fill="#0b63c1"/><path d="M3.8 9 L7 12.2 L14 5.2" fill="none" stroke="#fff" stroke-width="1.1"/></svg></div>
<div class="a" style="left:1191px;top:354px;width:18px;height:18px"><svg width="18" height="18" viewBox="0 0 18 18"><rect x="0.75" y="0.75" width="16.5" height="16.5" rx="3.5" fill="#fff" stroke="#cdcdcd" stroke-width="1.5"/></svg></div>
<div class="a" style="left:1299px;top:354px;width:18px;height:18px"><svg width="18" height="18" viewBox="0 0 18 18"><rect x="0.75" y="0.75" width="16.5" height="16.5" rx="3.5" fill="#fff" stroke="#cdcdcd" stroke-width="1.5"/></svg></div>
<div class="a" style="left:108px;top:30px;width:1px;height:344px;background:#6cb5fa"></div>
<div class="a" style="left:323px;top:30px;width:1px;height:344px;background:#6cb5fa"></div>
<div class="a" style="left:402px;top:30px;width:1px;height:344px;background:#6cb5fa"></div>
<div class="a" style="left:531px;top:30px;width:1px;height:344px;background:#6cb5fa"></div>
<div class="a" style="left:627px;top:30px;width:1px;height:344px;background:#6cb5fa"></div>
<div class="a" style="left:719px;top:30px;width:1px;height:344px;background:#6cb5fa"></div>
<div class="a" style="left:885px;top:30px;width:1px;height:344px;background:#6cb5fa"></div>
<div class="a" style="left:1021px;top:30px;width:1px;height:344px;background:#6cb5fa"></div>
<div class="a" style="left:1149px;top:30px;width:1px;height:344px;background:#6cb5fa"></div>
<div class="a" style="left:1250px;top:30px;width:1px;height:344px;background:#6cb5fa"></div>
<div class="a" style="left:1318px;top:30px;width:20px;height:400px;background:#fff"></div>
<div class="a" style="left:27px;top:29px;width:1px;height:400px;background:#e3e3e3"></div>
<div class="a" style="left:0;top:58px;width:28px;height:1px;background:#e3e3e3"></div>
<svg class="a" style="left:11px;top:69px" width="7" height="10" viewBox="0 0 7 10"><path d="M0.6 0.8 L6 5 L0.6 9.2 Z" fill="none" stroke="#777" stroke-width="1.1"/></svg>
<div class="a" style="left:1325px;top:47px;width:3px;height:172px;background:#9a9a9a;border-radius:2px"></div>
</div>
<div class="a" style="left:34px;top:609px;width:761px;height:3px;background:#949494;border-radius:2px"></div>
<div class="a" style="left:17px;top:619px;width:1335px;height:1px;background:#e3e3e3"></div>
<div class="a" style="left:25px;top:632px;width:18px;height:18px"><svg width="18" height="18" viewBox="0 0 18 18"><rect x="0" y="0" width="18" height="18" rx="4" fill="#0b63c1"/><path d="M3.8 9 L7 12.2 L14 5.2" fill="none" stroke="#fff" stroke-width="1.1"/></svg></div>
<div class="a" id="pbtn">+ Pesquisas</div>
<div class="a" id="logo"><span style="color:#0b6890">CONTTRADE</span> <span style="color:#555;letter-spacing:0.5px;margin-left:1px">MAIS</span></div>
<div class="a" id="frm">frmOperacaoLista</div>
<div class="a" style="left:654px;top:677px;width:110px;height:38px;border:1.5px solid #111"></div>
<svg class="a" style="left:659px;top:681px" width="30" height="30" viewBox="0 0 30 30"><defs><linearGradient id="gp" x1="0" y1="0" x2="0" y2="1"><stop offset="0" stop-color="#d8eef9"/><stop offset="0.45" stop-color="#9cc8ec"/><stop offset="0.55" stop-color="#7cb0e2"/><stop offset="1" stop-color="#5f9ad8"/></linearGradient></defs><circle cx="15" cy="15" r="13.5" fill="url(#gp)" stroke="#3d6db5" stroke-width="1"/><path d="M15 9.6 V20.4 M9.6 15 H20.4" stroke="#2f5fa8" stroke-width="7.4" stroke-linecap="round"/><path d="M15 9.6 V20.4 M9.6 15 H20.4" stroke="#eef2fa" stroke-width="5" stroke-linecap="round"/></svg>
<div class="a tb" style="left:711px">Novo</div>
<svg class="a" style="left:776px;top:680px" width="32" height="32" viewBox="0 0 32 32"><defs><linearGradient id="gd" x1="0" y1="0" x2="1" y2="1"><stop offset="0" stop-color="#ffffff"/><stop offset="1" stop-color="#d5dff0"/></linearGradient><linearGradient id="gpen" x1="0" y1="0" x2="1" y2="0"><stop offset="0" stop-color="#f7d36b"/><stop offset="1" stop-color="#d9891c"/></linearGradient></defs><path d="M7.5 1.5 H24.5 V27.5 H2.5 V6.5 Z" fill="url(#gd)" stroke="#7d92c8" stroke-width="1.2"/><path d="M2.5 6.5 H7.5 V1.5" fill="#fff" stroke="#7d92c8" stroke-width="1.2"/><g transform="translate(18.5 20.5) rotate(45)"><rect x="-2.6" y="-12" width="5.2" height="16" fill="url(#gpen)" stroke="#a8651a" stroke-width="0.6"/><rect x="-2.6" y="-13.5" width="5.2" height="2.2" fill="#8fb3e0"/><rect x="-2.6" y="-16.5" width="5.2" height="3.2" rx="0.8" fill="#d23b3b"/><path d="M-2.6 4 L0 10 L2.6 4 Z" fill="#f1d9b0"/><path d="M-1 7.7 L0 10 L1 7.7 Z" fill="#333"/></g></svg>
<div class="a tb" style="left:823px">Alterar</div>
<svg class="a" style="left:886px;top:679px" width="38" height="32" viewBox="0 0 38 32"><defs><linearGradient id="ger" x1="0" y1="0" x2="1" y2="0"><stop offset="0" stop-color="#f9c3ab"/><stop offset="0.6" stop-color="#e9785e"/><stop offset="1" stop-color="#c83a26"/></linearGradient><linearGradient id="geb" x1="0" y1="0" x2="1" y2="0"><stop offset="0" stop-color="#8ac6f5"/><stop offset="0.6" stop-color="#5aa0e6"/><stop offset="1" stop-color="#2a6fc0"/></linearGradient></defs><g transform="translate(20 16) rotate(45)"><path d="M-7 -14 Q-7 -16 -5 -16 H5 Q7 -16 7 -14 V4 H-7 Z" fill="url(#ger)"/><path d="M-7 4 H7 V10.5 Q7 12.5 5 12.5 H-5 Q-7 12.5 -7 10.5 Z" fill="url(#geb)"/><path d="M3.6 -15 V11.5" stroke="#fff" stroke-width="0.9" stroke-dasharray="1.2 0.6"/><path d="M-5.8 -14 V11" stroke="#fff" stroke-width="0.5" opacity="0.6" stroke-dasharray="1.2 0.6"/></g></svg>
<div class="a tb" style="left:940px">Excluir</div>
<svg class="a" style="left:1005px;top:682px" width="34" height="27" viewBox="0 0 34 27"><defs><linearGradient id="gbar" x1="0" y1="0" x2="1" y2="0"><stop offset="0" stop-color="#5a6a8c"/><stop offset="0.4" stop-color="#eef1f6"/><stop offset="1" stop-color="#4b5877"/></linearGradient><radialGradient id="glens" cx="0.38" cy="0.32" r="0.75"><stop offset="0" stop-color="#f4f8ff"/><stop offset="0.3" stop-color="#7aa8f0"/><stop offset="0.75" stop-color="#4a7fdc"/><stop offset="1" stop-color="#8fd0f0"/></radialGradient></defs><rect x="15" y="8" width="4" height="9" fill="#3b4563"/><path d="M4.5 13 L7.5 4 Q10 1.5 13 3.5 L15.5 13 Z" fill="url(#gbar)" stroke="#4d5a7a" stroke-width="0.8"/><path d="M18.5 13 L21 3.5 Q24 1.5 26.5 4 L29.5 13 Z" fill="url(#gbar)" stroke="#4d5a7a" stroke-width="0.8"/><circle cx="9" cy="17.5" r="7.3" fill="#f4f6fa" stroke="#4a5676" stroke-width="1.3"/><circle cx="25" cy="17.5" r="7.3" fill="#f4f6fa" stroke="#4a5676" stroke-width="1.3"/><circle cx="9" cy="17.5" r="5" fill="url(#glens)" stroke="#2c4f96" stroke-width="0.7"/><circle cx="25" cy="17.5" r="5" fill="url(#glens)" stroke="#2c4f96" stroke-width="0.7"/></svg>
<div class="a tb" style="left:1047px">Visualizar</div>
<svg class="a" style="left:1123px;top:681px" width="30" height="30" viewBox="0 0 30 30"><defs><linearGradient id="gbr" x1="0" y1="0" x2="0" y2="1"><stop offset="0" stop-color="#bcdaf5"/><stop offset="1" stop-color="#78aee0"/></linearGradient></defs><rect x="1.6" y="1.6" width="27" height="27" rx="1" fill="#f7f9fd" stroke="#6f86c2" stroke-width="1.2"/><rect x="5.5" y="5.5" width="19.5" height="5.2" fill="url(#gbr)" stroke="#4d84cc" stroke-width="0.9"/><rect x="5.5" y="12.4" width="19.5" height="5.2" fill="url(#gbr)" stroke="#4d84cc" stroke-width="0.9"/><rect x="5.5" y="19.4" width="19.5" height="5.4" fill="url(#gbr)" stroke="#4d84cc" stroke-width="0.9"/></svg>
<div class="a tb" style="left:1167px">+ Ações</div>
<svg class="a" style="left:1225px;top:693px" width="9" height="6" viewBox="0 0 9 6"><path d="M0.5 0.5 H8.5 L4.5 5.5 Z" fill="#222"/></svg>
<svg class="a" style="left:1249px;top:681px" width="30" height="30" viewBox="0 0 30 30"><defs><linearGradient id="grx" x1="0" y1="0" x2="0" y2="1"><stop offset="0" stop-color="#f2a08e"/><stop offset="0.45" stop-color="#dc5a45"/><stop offset="1" stop-color="#c02a20"/></linearGradient></defs><circle cx="15" cy="15" r="13.6" fill="url(#grx)" stroke="#b8302a" stroke-width="0.9"/><path d="M10.6 10.4 L19.4 19.6 M19.4 10.4 L10.6 19.6" stroke="#b02a22" stroke-width="6" stroke-linecap="round"/><path d="M10.6 10.4 L19.4 19.6 M19.4 10.4 L10.6 19.6" stroke="#e8eef8" stroke-width="4.2" stroke-linecap="round"/></svg>
<div class="a tb" style="left:1296px">Fechar</div>
<div class="a" id="tip"><span>Área de Trabalho</span></div>
<svg class="a" style="left:0;top:0" width="1364" height="729" viewBox="0 0 1364 729"><g transform="translate(1 1.2)" opacity="0.3"><rect x="145" y="65.5" width="96.5" height="34" rx="16" ry="17" fill="none" stroke="#666" stroke-width="2.8" stroke-dasharray="12.4 7.4" stroke-dashoffset="-7.5" stroke-linecap="round"/><rect x="640.5" y="669.5" width="129.5" height="52" rx="24" ry="26" fill="none" stroke="#666" stroke-width="2.8" stroke-dasharray="12.4 7.3" stroke-dashoffset="-1.4" stroke-linecap="round"/></g><rect x="145" y="65.5" width="96.5" height="34" rx="16" ry="17" fill="none" stroke="#fd4447" stroke-width="2.8" stroke-dasharray="12.4 7.4" stroke-dashoffset="-7.5" stroke-linecap="round"/><rect x="640.5" y="669.5" width="129.5" height="52" rx="24" ry="26" fill="none" stroke="#fd4447" stroke-width="2.8" stroke-dasharray="12.4 7.3" stroke-dashoffset="-1.4" stroke-linecap="round"/></svg>
<div class="a" style="left:0;top:727px;width:47px;height:2px;background:#111"></div>
<div class="a" style="left:335px;top:727px;width:1029px;height:2px;background:#111"></div>
<div class="a" style="left:47px;top:727px;width:288px;height:1px;background:#c6c6c6"></div>

</body></html>
